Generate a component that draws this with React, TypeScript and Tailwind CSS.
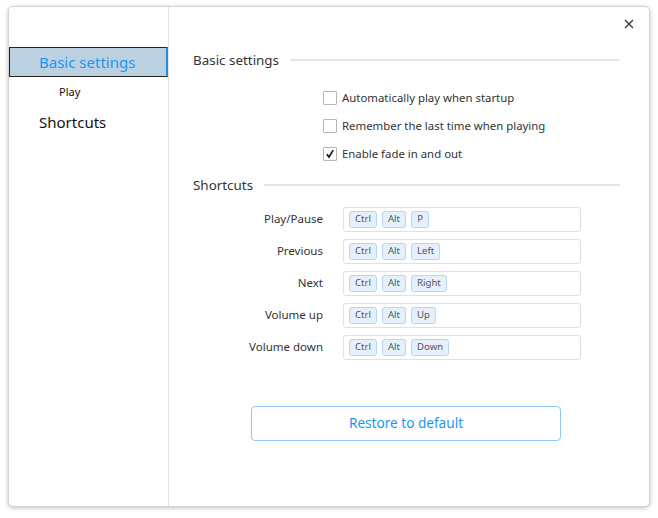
import React from "react";

const font = { fontFamily: '"Noto Sans", "Open Sans", sans-serif' };

const shortcuts = [
  { label: "Play/Pause", keys: ["Ctrl", "Alt", "P"] },
  { label: "Previous", keys: ["Ctrl", "Alt", "Left"] },
  { label: "Next", keys: ["Ctrl", "Alt", "Right"] },
  { label: "Volume up", keys: ["Ctrl", "Alt", "Up"] },
  { label: "Volume down", keys: ["Ctrl", "Alt", "Down"] },
];

const options = [
  { text: "Automatically play when startup", checked: false },
  { text: "Remember the last time when playing", checked: false },
  { text: "Enable fade in and out", checked: true },
];

function SectionTitle({ title }: { title: string }) {
  return (
    <div className="flex items-center h-[20px]">
      <span className="text-[13.4px] text-[#333] mr-[11px] whitespace-nowrap">{title}</span>
      <div className="flex-1 h-[2px] bg-[#e6e6e6]" />
    </div>
  );
}

function Checkbox({ checked }: { checked: boolean }) {
  return (
    <span className="w-[14px] h-[14px] border border-[#b5b5b5] bg-white flex items-center justify-center rounded-[1px]">
      {checked && (
        <svg width="10" height="10" viewBox="0 0 10 10">
          <path d="M1.8 5.2 L4 8 L8.2 1.2" stroke="#111" strokeWidth="1.6" fill="none" />
        </svg>
      )}
    </span>
  );
}

export default function App() {
  return (
    <div className="w-[658px] h-[518px] bg-white pt-[6px] pl-[8px]" style={font}>
      <div className="relative w-[642px] h-[501px] bg-white rounded-[5px] border border-[#d4d4d4] shadow-[0_1px_4px_rgba(0,0,0,0.25)] flex overflow-hidden">
        {/* sidebar */}
        <div className="w-[160px] border-r border-[#e2e2e2] pt-[40px] flex flex-col">
          <div className="h-[30px] bg-[#bcd1e0] border border-[#222] border-r-[2px] border-r-[#1f8fe8] flex items-center pl-[29px] text-[15px] text-[#2196f3]">
            Basic settings
          </div>
          <div className="h-[30px] flex items-center pl-[50px] text-[11px] text-[#111]">Play</div>
          <div className="h-[30px] flex items-center pl-[30px] text-[15px] text-[#111]">Shortcuts</div>
        </div>

        {/* close */}
        <button className="absolute right-[14px] top-[11px] w-[12px] h-[12px] flex items-center justify-center">
          <svg width="10" height="10" viewBox="0 0 10 10">
            <path d="M1 1 L9 9 M9 1 L1 9" stroke="#333" strokeWidth="1.3" />
          </svg>
        </button>

        {/* content */}
        <div className="flex-1 pl-[24px] pr-[29px] pt-[43px] flex flex-col">
          <SectionTitle title="Basic settings" />
          <div className="flex flex-col pl-[130px] pt-[21px] gap-[14px]">
            {options.map((o) => (
              <label key={o.text} className="flex items-center h-[14px] gap-[5px] text-[11.4px] text-[#333]">
                <Checkbox checked={o.checked} />
                <span>{o.text}</span>
              </label>
            ))}
          </div>
          <div className="mt-[14px]">
            <SectionTitle title="Shortcuts" />
          </div>
          <div className="flex flex-col gap-[8px] mt-[12px]">
            {shortcuts.map((s) => (
              <div key={s.label} className="flex items-center h-[24px]">
                <span className="w-[130px] text-right text-[11.5px] text-[#333]">{s.label}</span>
                <div className="ml-[20px] w-[238px] h-[25px] border border-[#e0e0e0] rounded-[3px] flex items-center gap-[5px] px-[5px]">
                  {s.keys.map((k) => (
                    <span
                      key={k}
                      className="h-[17px] min-w-[18px] px-[5px] bg-[#e6f0fc] border border-[#b9d5f4] rounded-[3px] flex items-center justify-center text-[9.6px] text-[#555]"
                    >
                      {k}
                    </span>
                  ))}
                </div>
              </div>
            ))}
          </div>
          <button className="mt-[47px] ml-[58px] w-[310px] h-[35px] border border-[#90c8f8] rounded-[4px] bg-white text-[13.6px] text-[#1e96f0]">
            Restore to default
          </button>
        </div>
      </div>
    </div>
  );
}
